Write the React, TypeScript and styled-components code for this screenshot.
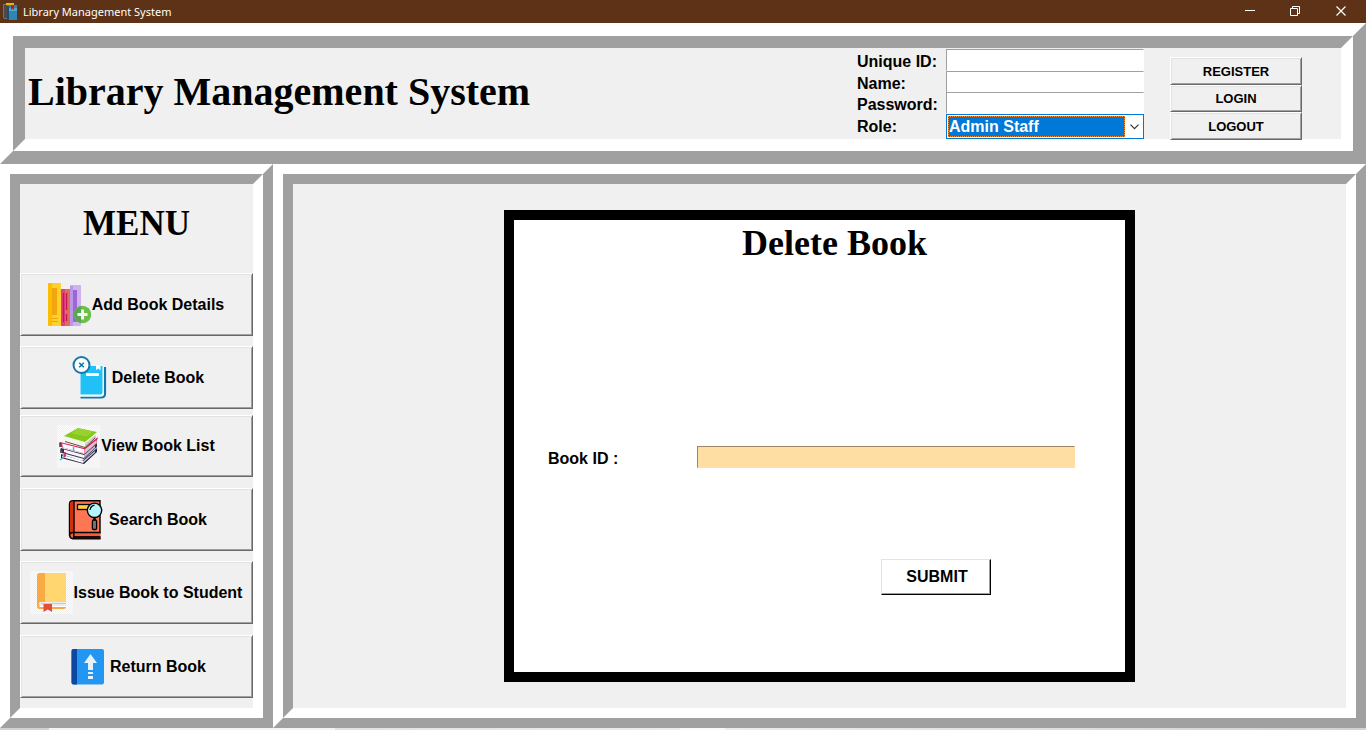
import React from "react";
import styled, { createGlobalStyle, css } from "styled-components";

const SANS = '"Liberation Sans", Arial, sans-serif';
const SERIF = '"Liberation Serif", "Times New Roman", serif';
const FACE = "#f0f0f0";
const SHADOW = "#a0a0a0";

const GlobalStyle = createGlobalStyle`
  *, *::before, *::after { box-sizing: border-box; }
  body { margin: 0; background: ${FACE}; color: #000; font-family: ${SANS}; }
  h1, h2 { margin: 0; font-family: ${SERIF}; font-weight: bold; }
`;

const Window = styled.div`
  display: flex;
  flex-direction: column;
  min-height: 100vh;
`;

const TitleBar = styled.div`
  display: flex;
  align-items: center;
  height: 23px;
  padding: 0 2px 0 3px;
  background: #5e3216;
  color: #fff;
`;

const WindowTitle = styled.span`
  flex: 1;
  margin-left: 4px;
  font: 11px/23px "Noto Sans", "Segoe UI", sans-serif;
`;

const WindowButton = styled.button`
  display: flex;
  align-items: center;
  justify-content: center;
  width: 46px;
  height: 21px;
  padding: 0;
  border: 0;
  background: transparent;
`;

/* Double bevel: a raised outer edge round a sunken inner one. */
const bevel = (outer: number, inner: number) => css`
  border: ${outer}px solid;
  border-color: #fff ${SHADOW} ${SHADOW} #fff;
  & > * {
    border: ${inner}px solid;
    border-color: ${SHADOW} #fff #fff ${SHADOW};
    background: ${FACE};
  }
`;

const HeaderFrame = styled.header`
  ${bevel(13, 12)}
`;

const HeaderBody = styled.div`
  display: flex;
  align-items: flex-start;
  padding-right: 39px;
`;

const AppTitle = styled.h1`
  flex: 1;
  padding-left: 3px;
  font-size: 40px;
  line-height: 88px;
`;

const LoginForm = styled.form`
  display: grid;
  grid-template-columns: 89px 198px;
  grid-template-rows: 22px 21px 22px 25px;
  padding-top: 1px;
`;

const FieldLabel = styled.label`
  font-size: 16px;
  font-weight: bold;
  line-height: 26px;
`;

const Entry = styled.input<{ $tint?: boolean }>`
  width: 100%;
  height: 22px;
  padding: 0 2px;
  border: 1px solid;
  border-color: ${(p) =>
    p.$tint ? "#9b8763 #ffdea3 #ffdea3 #9b8763" : `${SHADOW} #fff #fff ${SHADOW}`};
  border-radius: 0;
  outline: 0;
  background: ${(p) => (p.$tint ? "#ffdea3" : "#fff")};
  font: bold 16px ${SANS};
`;

const SelectBox = styled.div`
  position: relative;
  height: 25px;
  padding: 1px;
  border: 1px solid #0078d7;
  background: #fff;

  &::after {
    content: "";
    position: absolute;
    inset: 1px 18px 1px 1px;
    border: 1px dotted #ff8728;
    pointer-events: none;
  }

  svg {
    position: absolute;
    top: 9px;
    right: 4px;
    pointer-events: none;
  }
`;

const Select = styled.select`
  display: block;
  width: 100%;
  height: 21px;
  padding: 0 0 0 1px;
  border: 0;
  outline: 0;
  appearance: none;
  background: linear-gradient(to left, #fff 17px, #0078d7 17px);
  color: #fff;
  font: bold 16px/21px ${SANS};
`;

const RaisedButton = styled.button`
  padding: 0;
  border: 1px solid;
  border-color: #fff #696969 #696969 #fff;
  box-shadow: inset 1px 1px #e3e3e3, inset -1px -1px ${SHADOW};
  border-radius: 0;
  background: ${FACE};
  color: #000;
  font: bold 13px ${SANS};
`;

const AuthButtons = styled.div`
  display: grid;
  grid-template-rows: 28px 27px 28px;
  width: 132px;
  margin: 9px 0 -1px 26px;
`;

const Columns = styled.div`
  display: flex;
  flex: 1;
`;

const MenuFrame = styled.nav`
  display: flex;
  width: 273px;
  ${bevel(10, 10)}
`;

const MenuBody = styled.div`
  flex: 1;
  padding-bottom: 10px;
`;

const MenuTitle = styled.h2`
  height: 89px;
  font-size: 35px;
  line-height: 80px;
  text-align: center;
`;

const MenuList = styled.div`
  display: grid;
  grid-template-rows: 73px 69px 73px 73px 74px 63px;
  align-items: start;
`;

const MenuButton = styled(RaisedButton)<{ $short?: boolean }>`
  display: flex;
  align-items: center;
  justify-content: center;
  gap: 1px;
  height: ${(p) => (p.$short ? 62 : 63)}px;
  padding-right: 1px;
  font-size: 16px;
  white-space: nowrap;
`;

const MainFrame = styled.main`
  display: flex;
  flex: 1;
  ${bevel(10, 10)}
`;

const MainBody = styled.div`
  display: flex;
  flex: 1;
  justify-content: center;
  padding: 26px;
`;

const Card = styled.form`
  width: 100%;
  max-width: 631px;
  padding: 0 50px 0 34px;
  border: 10px solid #000;
  background: #fff;
`;

const CardTitle = styled.h2`
  padding-left: 46px;
  font-size: 36px;
  line-height: 46px;
  text-align: center;
`;

const FieldRow = styled.div`
  display: grid;
  grid-template-columns: 149px 1fr;
  grid-template-rows: 24px;
  margin-top: 180px;
`;

const SubmitRow = styled.div`
  display: flex;
  justify-content: flex-end;
  margin-top: 89px;
  padding-right: 84px;
`;

const SubmitButton = styled(RaisedButton)`
  width: 110px;
  height: 36px;
  padding-left: 2px;
  border-color: #e3e3e3 #000 #000 #e3e3e3;
  box-shadow: inset -1px -1px ${SHADOW};
  background: #fff;
  font-size: 16px;
`;

const BottomEdge = styled.div`
  height: 2px;
  background: linear-gradient(
    to right,
    #d2d2d2 49px,
    #f4f4f4 49px,
    #f4f4f4 335px,
    #e2e2e2 335px,
    #ececec 680px,
    #fafafa 680px,
    #fafafa 725px,
    #ececec 725px,
    #d2d2d2 100%
  );
`;

const Glyph = ({ children }: { children: React.ReactNode }) => (
  <svg width="43" height="43" viewBox="0 0 43 43" aria-hidden="true">
    {children}
  </svg>
);

const Dither = ({ id }: { id: string }) => (
  <>
    <pattern id={id} width="2" height="2" patternUnits="userSpaceOnUse">
      <rect width="2" height="2" fill="#f1f1f1" />
      <rect width="1" height="1" fill="#fbfbfb" />
      <rect x="1" y="1" width="1" height="1" fill="#fbfbfb" />
    </pattern>
    <rect width="43" height="43" fill={`url(#${id})`} />
  </>
);

const AddIcon = () => (
  <Glyph>
    <rect width="13" height="43" rx="1" fill="#ffd02b" />
    <path d="M1 0h3v43H1a1 1 0 0 1-1-1V1a1 1 0 0 1 1-1z" fill="#fbbd04" />
    <rect x="4" y="5" width="5" height="27" fill="#f2a50c" />
    <path d="M3 35.5h7M3 38.5h7" stroke="#f2a50c" />
    <rect x="13" y="6" width="9" height="37" fill="#dd6f58" />
    <rect x="13" y="6" width="4" height="37" fill="#e0437c" />
    <path d="M15.5 10v29M18.5 10v17M18.5 31v7" stroke="#c2185b" strokeWidth="1.4" />
    <rect x="22" y="2" width="11" height="41" rx="1" fill="#ceb2ee" />
    <rect x="22" y="3" width="3" height="40" fill="#bc95e8" />
    <rect x="25" y="7" width="4" height="32" fill="#9d66d8" />
    <circle cx="34.5" cy="31.5" r="8.7" fill="#6cc04a" />
    <path d="M33 23v17a8.7 8.7 0 0 1 0-17z" fill="#5aa552" />
    <path d="M34.5 26.5v10M29.5 31.5h10" stroke="#f1f8ee" strokeWidth="3" />
  </Glyph>
);

const DeleteIcon = () => (
  <Glyph>
    <path d="M12.5 41.5h20.5q4 0 4-4V11" fill="none" stroke="#1178ae" strokeWidth="2.2" />
    <path d="M12.5 10H36v27q0 3.5-3.5 3.5h-20z" fill="#fff" />
    <path d="M12.5 10h22v26q0 2.5-2.5 2.5H12.5z" fill="#20c1f6" />
    <path d="M28 9.5h4.5v5l-2.2-2-2.3 1.5z" fill="#fff" />
    <rect x="18" y="17" width="13" height="3" rx="1" fill="#fff" />
    <circle cx="13.5" cy="9" r="8" fill="#fff" stroke="#1178ae" strokeWidth="2" />
    <path d="m11.2 6.7 4.6 4.6m0-4.6-4.6 4.6" stroke="#1178ae" strokeWidth="1.6" />
  </Glyph>
);

const StackIcon = () => (
  <Glyph>
    <Dither id="dither-stack" />
    <path d="M4 29 25 36 40 23v4L27 39 4 33z" fill="#2b2848" />
    <path d="M6 30 26 36v2L5 32z" fill="#fff" />
    <path d="M26 36 38 26v1.5L26 38z" fill="#c9c7d8" />
    <path d="M4 23 27 29 40 18v4L27 34 5 28z" fill="#34314f" />
    <path d="M7 24.5 27 30v3L7 27.5z" fill="#f5f5fa" />
    <path d="M27 30 38 20.5V23L27 33z" fill="#b9bccb" />
    <path d="M3 17 27 23 41 12l-1 3.5L39.5 18 28 28.5 4 22z" fill="#d81b60" />
    <path d="M5 18.5 27.5 24.3v4L6 22.5z" fill="#fdfdfd" />
    <path d="m28 24.3 11.5-9.3v2.8L28 28.3z" fill="#d8c9ce" />
    <path d="M3 17.5v4.5M4 23.5v4.5" stroke="#2a1930" strokeWidth="1.3" />
    <path d="M7 11 28 17l12-10-1.5 5.5L28 22.5 8 16.5z" fill="#f3f7ea" />
    <path d="m28 18.5 11-9-1 3-10 9.5z" fill="#c9d0bd" />
    <path d="M8 16.5 28 22.5 38.5 12.5" fill="none" stroke="#6d4a3c" />
    <path d="M7 11 21 3l19 4-12 10z" fill="#84c81a" />
    <path d="m14 8.5 7-5 15 3-6 5z" fill="#a4da3e" opacity=".6" />
    <path d="M16.5 22v5M7 28v4l-4 3" fill="none" stroke="#45b8dc" strokeWidth="1.5" />
    <path d="M8 27v5" stroke="#d81b60" strokeWidth="1.5" />
  </Glyph>
);

const SearchIcon = () => (
  <Glyph>
    <path d="M8 2.7h27v32H6.5q-2 1-2 3V6q0-3.3 3.5-3.3z" fill="#ff7654" stroke="#000" strokeWidth="1.4" />
    <path d="M8.5 3.3v31.2l-3.4 1.5V6q0-2.5 3.4-2.7z" fill="#d32f0b" />
    <path d="M9 3v31" stroke="#000" strokeWidth="1.4" />
    <path d="M35.5 34.5H8q-3.3 0-3.3 3t3.3 3.3h27.5" fill="#fa5a37" stroke="#000" strokeWidth="1.4" />
    <path d="M9 38h26.5v3H9z" fill="#1a0a07" />
    <path d="M8.8 34.5V41" stroke="#000" strokeWidth="1.4" />
    <rect x="12.5" y="6.5" width="12" height="5" fill="#ffcf3f" stroke="#000" strokeWidth="1.3" />
    <path d="M29.5 19v4" stroke="#000" strokeWidth="2.4" />
    <circle cx="29.5" cy="12.3" r="7.2" fill="#b4f4ff" stroke="#000" strokeWidth="1.4" />
    <path d="M25 12q.5-4 4.5-4.8" fill="none" stroke="#000" strokeWidth="1.2" />
    <rect x="27.4" y="22" width="4.2" height="9.5" rx="1.2" fill="#76727e" stroke="#000" strokeWidth="1.3" />
  </Glyph>
);

const IssueIcon = () => (
  <Glyph>
    <Dither id="dither-issue" />
    <path d="M9.5 2h24q2.5 0 2.5 2.5v31q0 2.5-2.5 2.5h-24Q7 38 7 35.5v-31Q7 2 9.5 2z" fill="#f8ab42" />
    <path d="M15 2h18.5Q36 2 36 4.5V31H15z" fill="#ffd670" />
    <path d="M10.5 31H36v4H10.5q-1.5 0-1.5-2t1.5-2z" fill="#ececec" />
    <path d="M11 32.5h25" stroke="#c3cbd0" />
    <path d="M9.5 35.5H36" stroke="#fff" />
    <path d="M13.5 33h8.5v8l-4.2-2.6-4.3 2.6z" fill="#e64c3c" />
  </Glyph>
);

const ReturnIcon = () => (
  <Glyph>
    <rect x="5.5" y="4" width="32.5" height="35.5" rx="2" fill="#2196f3" />
    <path d="M7.5 4H11v35.5H7.5q-2 0-2-2V6q0-2 2-2z" fill="#0d47a1" />
    <path d="m24.5 9 6.5 9h-4v7h-5v-7h-4z" fill="#e3f2fd" />
    <path d="M22 27h5v2h-5zM22 31h5v3h-5z" fill="#e3f2fd" />
  </Glyph>
);

const AppIcon = () => (
  <svg width="16" height="18" viewBox="0 0 16 18" aria-hidden="true">
    <path d="M0 1h6v15H1L0 14z" fill="#77716d" />
    <path d="M1 2h4v13H1z" fill="#4b4a50" />
    <path d="M4 2h10v15H4z" fill="#2f86b2" />
    <path d="M5 5h9v3H5z" fill="#58a5c8" />
    <path d="M4 3h2v14H4z" fill="#1b4f70" />
    <path d="M3 0h8v2H3z" fill="#f5b20b" />
    <path d="M8 2h3v5L9.5 5.5 8 7z" fill="#c4161c" />
  </svg>
);

const menuItems = [
  { label: "Add Book Details", Icon: AddIcon },
  { label: "Delete Book", Icon: DeleteIcon },
  { label: "View Book List", Icon: StackIcon, short: true },
  { label: "Search Book", Icon: SearchIcon },
  { label: "Issue Book to Student", Icon: IssueIcon },
  { label: "Return Book", Icon: ReturnIcon },
];

export default function App() {
  return (
    <Window>
      <GlobalStyle />
      <TitleBar>
        <AppIcon />
        <WindowTitle>Library Management System</WindowTitle>
        <WindowButton aria-label="Minimize">
          <svg width="11" height="11" viewBox="0 0 11 11" stroke="#fff" fill="none">
            <path d="M1 4.5h10" />
          </svg>
        </WindowButton>
        <WindowButton aria-label="Restore">
          <svg width="11" height="11" viewBox="0 0 11 11" stroke="#fff" fill="none">
            <path d="M.5 2.5h7v7h-7zM2.5 2.5v-2h7v7h-2" />
          </svg>
        </WindowButton>
        <WindowButton aria-label="Close">
          <svg width="11" height="11" viewBox="0 0 11 11" stroke="#fff" fill="none">
            <path d="m.5.5 9 9m0-9-9 9" strokeWidth="1.2" />
          </svg>
        </WindowButton>
      </TitleBar>

      <HeaderFrame>
        <HeaderBody>
          <AppTitle>Library Management System</AppTitle>
          <LoginForm>
            <FieldLabel htmlFor="unique-id">Unique ID:</FieldLabel>
            <Entry id="unique-id" />
            <FieldLabel htmlFor="name">Name:</FieldLabel>
            <Entry id="name" />
            <FieldLabel htmlFor="password">Password:</FieldLabel>
            <Entry id="password" type="password" />
            <FieldLabel htmlFor="role">Role:</FieldLabel>
            <SelectBox>
              <Select id="role" defaultValue="Admin Staff">
                <option>Admin Staff</option>
                <option>Student</option>
              </Select>
              <svg width="9" height="6" viewBox="0 0 9 6" fill="none" stroke="#333">
                <path d="m.5.7 4 4 4-4" strokeWidth="1.2" />
              </svg>
            </SelectBox>
          </LoginForm>
          <AuthButtons>
            <RaisedButton>REGISTER</RaisedButton>
            <RaisedButton>LOGIN</RaisedButton>
            <RaisedButton>LOGOUT</RaisedButton>
          </AuthButtons>
        </HeaderBody>
      </HeaderFrame>

      <Columns>
        <MenuFrame>
          <MenuBody>
            <MenuTitle>MENU</MenuTitle>
            <MenuList>
              {menuItems.map(({ label, Icon, short }) => (
                <MenuButton key={label} $short={short}>
                  <Icon />
                  {label}
                </MenuButton>
              ))}
            </MenuList>
          </MenuBody>
        </MenuFrame>
        <MainFrame>
          <MainBody>
            <Card onSubmit={(e) => e.preventDefault()}>
              <CardTitle>Delete Book</CardTitle>
              <FieldRow>
                <FieldLabel htmlFor="book-id">Book ID :</FieldLabel>
                <Entry id="book-id" $tint />
              </FieldRow>
              <SubmitRow>
                <SubmitButton type="submit">SUBMIT</SubmitButton>
              </SubmitRow>
            </Card>
          </MainBody>
        </MainFrame>
      </Columns>
      <BottomEdge />
    </Window>
  );
}
